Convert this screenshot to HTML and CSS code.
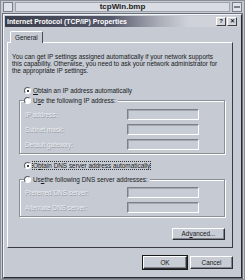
FILE: index.html
```html
<!DOCTYPE html>
<html lang="en">
<head>
    <meta charset="UTF-8">
    <title>tcpWin.bmp</title>
    <link rel="stylesheet" href="styles.css">
</head>
<body>
    <div class="win">
        <div class="win-bar">
            <span class="win-btn"></span>
            <div class="win-title">tcpWin.bmp</div>
            <span class="win-btn"><i></i></span>
        </div>

        <div class="dialog">
            <div class="dlg-bar">
                <span class="dlg-title">Internet Protocol (TCP/IP) Properties</span>
                <span class="cap-btn">?</span>
                <span class="cap-btn">&#x2715;</span>
            </div>

            <div class="tabs">
                <span class="tab">General</span>
            </div>

            <div class="panel">
                <p class="intro">You can get IP settings assigned automatically if your network supports<br>this capability. Otherwise, you need to ask your network administrator for<br>the appropriate IP settings.</p>

                <div class="radio first"><span class="dot on"></span><u>O</u>btain an IP address automatically</div>

                <div class="group ip">
                    <div class="radio legend"><span class="dot"></span>U<u>s</u>e the following IP address:</div>
                    <div class="field"><span class="off">IP address:</span><span class="box"></span></div>
                    <div class="field"><span class="off">Subnet mask:</span><span class="box"></span></div>
                    <div class="field"><span class="off">Default gateway:</span><span class="box"></span></div>
                </div>

                <div class="radio dns"><span class="dot on"></span><span class="focus">O<u>b</u>tain DNS server address automatically</span></div>

                <div class="group dns-group">
                    <div class="radio legend"><span class="dot"></span>Us<u>e</u> the following DNS server addresses:</div>
                    <div class="field"><span class="off">Preferred DNS server:</span><span class="box"></span></div>
                    <div class="field"><span class="off">Alternate DNS server:</span><span class="box"></span></div>
                </div>

                <div class="adv-row">
                    <span class="btn adv">Ad<u>v</u>anced...</span>
                </div>
            </div>

            <div class="actions">
                <span class="btn ok">OK</span>
                <span class="btn cancel">Cancel</span>
            </div>
        </div>
    </div>
</body>
</html>
```

FILE: styles.css
```css
body {
    margin: 0;
    width: 245px;
    height: 280px;
    overflow: hidden;
    background: #c5cad3;
    font-family: "Liberation Sans", Arial, sans-serif;
    color: #1a1a1a;
}
.win {
    height: 280px;
    box-sizing: border-box;
    padding: 1px 2px 2px 2px;
    border: 1px solid #8a8e96;
    background: #c5cad3;
}
.win-bar {
    display: flex;
    align-items: center;
    gap: 2px;
    height: 10px;
}
.win-btn {
    width: 8px;
    height: 8px;
    border: 1px solid #7a7e86;
    background: #dfe2e8;
    position: relative;
}
.win-btn i {
    position: absolute;
    left: 1px;
    right: 1px;
    top: 3px;
    height: 2px;
    background: #7a7e86;
}
.win-title {
    flex: 1;
    height: 8px;
    line-height: 8px;
    border: 1px solid #9ea2aa;
    background: #d9dce2;
    text-align: center;
    font-size: 8px;
    font-weight: bold;
    color: #222;
}
.dialog {
    margin-top: 2px;
    height: 264px;
    box-sizing: border-box;
    border: 1px solid;
    border-color: #f4f5f7 #2a2a2e #2a2a2e #f4f5f7;
    box-shadow: 0 0 0 1px #6a6e76;
    padding: 1px;
}
.dlg-bar {
    display: flex;
    align-items: center;
    gap: 1px;
    height: 11px;
    padding: 0 3px 0 2px;
    background: linear-gradient(90deg, #3b3e4c 0%, #55586a 45%, #a9abb6 65%, #cfd2d9 78%, #cfd2d9 100%);
}
.dlg-title {
    flex: 1;
    color: #fff;
    font-size: 6.9px;
    font-weight: bold;
    white-space: nowrap;
}
.cap-btn {
    width: 8px;
    height: 7px;
    line-height: 7px;
    text-align: center;
    font-size: 6px;
    font-weight: bold;
    background: #d4d7dd;
    border: 1px solid;
    border-color: #fff #404040 #404040 #fff;
}
.tabs {
    display: flex;
    padding: 3px 5px 0 5px;
}
.tab {
    height: 11px;
    line-height: 11px;
    padding: 0 4px;
    font-size: 6.4px;
    border: 1px solid;
    border-bottom: none;
    border-color: #fff #4a4a50 #4a4a50 #fff;
    border-radius: 2px 2px 0 0;
    position: relative;
    top: 1px;
    background: #c5cad3;
}
.panel {
    margin: 0 7px 0 2px;
    height: 206px;
    box-sizing: border-box;
    border: 1px solid;
    border-color: #fff #3a3a40 #3a3a40 #fff;
    padding: 0 0 0 4px;
    font-size: 6.4px;
}
.intro {
    margin: 10px 0 0 0;
    line-height: 7.1px;
    white-space: nowrap;
}
.radio {
    display: flex;
    align-items: center;
    height: 9px;
    padding-left: 12px;
}
.radio.first {
    margin-top: 12px;
}
.radio.dns {
    margin-top: 7px;
}
.dot {
    width: 5px;
    height: 5px;
    border-radius: 50%;
    border: 1px solid;
    border-color: #5a5e66 #fff #fff #5a5e66;
    background: #fff;
    margin-right: 2px;
    position: relative;
}
.dot.on::after {
    content: "";
    position: absolute;
    left: 1.5px;
    top: 1.5px;
    width: 2px;
    height: 2px;
    border-radius: 50%;
    background: #000;
}
.focus {
    outline: 1px dotted #333;
}
.group {
    margin: 0 7px 0 7px;
    border: 1px solid #8a8e96;
    box-shadow: inset 1px 1px 0 #fff, 1px 1px 0 #fff;
    padding: 0 0 3px 4px;
}
.group.ip {
    margin-top: 5px;
}
.group.dns-group {
    margin-top: 9px;
}
.legend {
    margin-top: -5px;
    padding: 0 2px 0 0;
    width: fit-content;
    background: #c5cad3;
}
.field {
    display: flex;
    align-items: center;
    height: 11px;
    margin-top: 4px;
}
.legend + .field {
    margin-top: 4px;
}
.dns-group .legend + .field {
    margin-top: 3px;
}
.off {
    width: 102px;
    padding-left: 1px;
    color: #eceef2;
    text-shadow: 0.6px 0.6px 0 #969ba5;
}
.box {
    width: 70px;
    height: 9px;
    border: 1px solid;
    border-color: #7c808a #fff #fff #7c808a;
    box-shadow: inset 1px 1px 0 #a4a8b0;
    background: #c8ccd5;
}
.adv-row {
    display: flex;
    justify-content: flex-end;
    margin-top: 11px;
    padding-right: 7px;
}
.btn {
    display: inline-block;
    box-sizing: border-box;
    height: 12px;
    line-height: 10px;
    text-align: center;
    font-size: 6.4px;
    border: 1px solid;
    border-color: #fff #2e2e34 #2e2e34 #fff;
    box-shadow: inset -1px -1px 0 #80848c;
    background: #c8ccd4;
}
.adv {
    width: 53px;
}
.actions {
    display: flex;
    justify-content: flex-end;
    gap: 3px;
    margin-top: 8px;
    padding-right: 7px;
}
.actions .btn {
    height: 13px;
    line-height: 11px;
}
.ok {
    width: 44px;
    outline: 1px solid #1a1a1a;
}
.cancel {
    width: 43px;
}
```
